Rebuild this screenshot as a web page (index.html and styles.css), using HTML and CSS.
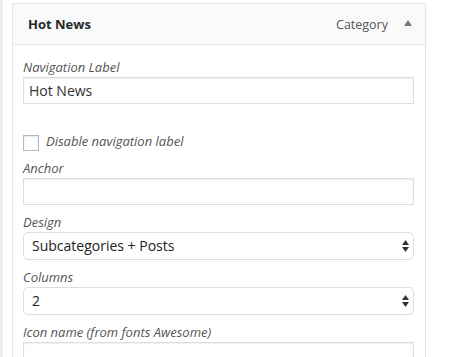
FILE: index.html
```html
<!DOCTYPE html>
<html lang="en">
<head>
    <meta charset="UTF-8">
    <meta name="viewport" content="width=device-width, initial-scale=1.0">
    <title>Menu item settings</title>
    <link rel="stylesheet" href="styles.css">
</head>
<body>
    <div class="page">
        <div class="menu-item">
            <!-- Header -->
            <div class="item-bar">
                <span class="item-title">Hot News</span>
                <span class="item-controls">
                    <span class="item-type">Category</span>
                    <svg class="item-toggle" width="8" height="6" viewBox="0 0 8 6">
                        <path d="M4 0 L8 6 L0 6 Z" fill="#777"/>
                    </svg>
                </span>
            </div>

            <!-- Settings -->
            <div class="item-settings">
                <div class="field">
                    <label for="navLabel">Navigation Label</label>
                    <input type="text" id="navLabel" value="Hot News">
                </div>

                <div class="field-check">
                    <span class="checkbox"></span>
                    <span class="check-label">Disable navigation label</span>
                </div>

                <div class="field">
                    <label for="anchor">Anchor</label>
                    <input type="text" id="anchor">
                </div>

                <div class="field">
                    <label for="design">Design</label>
                    <div class="select-wrap">
                        <div class="select" id="design">Subcategories + Posts</div>
                        <svg class="select-arrows" width="7" height="12" viewBox="0 0 7 12">
                            <path d="M3.5 0 L7 5 L0 5 Z M3.5 12 L7 7 L0 7 Z" fill="#333"/>
                        </svg>
                    </div>
                </div>

                <div class="field">
                    <label for="columns">Columns</label>
                    <div class="select-wrap">
                        <div class="select" id="columns">2</div>
                        <svg class="select-arrows" width="7" height="12" viewBox="0 0 7 12">
                            <path d="M3.5 0 L7 5 L0 5 Z M3.5 12 L7 7 L0 7 Z" fill="#333"/>
                        </svg>
                    </div>
                </div>

                <div class="field">
                    <label for="icon">Icon name (from fonts Awesome)</label>
                    <input type="text" id="icon">
                </div>
            </div>
        </div>
    </div>
</body>
</html>
```

FILE: styles.css
```css
body {
    font-family: "Open Sans", "Liberation Sans", sans-serif;
    margin: 0;
    padding: 0;
    background-color: #fff;
    color: #333;
    overflow: hidden;
    height: 357px;
}

.page {
    border-left: 3px solid #eee;
    padding: 3px 0 0 9px;
    height: 357px;
    box-sizing: border-box;
    overflow: hidden;
}

.menu-item {
    width: 414px;
    box-sizing: border-box;
    border: 1px solid #e5e5e5;
    border-bottom: none;
}

.item-bar {
    height: 40px;
    background-color: #fafafa;
    border-bottom: 1px solid #e5e5e5;
    display: flex;
    align-items: center;
    justify-content: space-between;
    padding: 0 13px 0 15px;
}

.item-title {
    font-size: 13px;
    font-weight: bold;
    color: #23282d;
}

.item-controls {
    display: flex;
    align-items: center;
    gap: 16px;
}

.item-type {
    font-size: 12.5px;
    color: #555;
}

.item-toggle {
    margin-top: -2px;
}

.item-settings {
    padding: 12px 11px 0 10px;
}

.field {
    margin-bottom: 7px;
}

.field label {
    display: block;
    font-size: 13px;
    font-style: italic;
    line-height: 20px;
    color: #555;
}

.field input {
    display: block;
    width: 100%;
    height: 27px;
    box-sizing: border-box;
    margin: 0;
    padding: 0 5px;
    border: 1px solid #ddd;
    border-radius: 0;
    box-shadow: inset 0 1px 2px rgba(0, 0, 0, 0.07);
    font-family: inherit;
    font-size: 14px;
    color: #333;
    background-color: #fff;
}

.field-check {
    display: flex;
    align-items: center;
    height: 20px;
    margin: 27px 0 7px;
}

.checkbox {
    width: 16px;
    height: 16px;
    box-sizing: border-box;
    border: 1px solid #b4b9be;
    box-shadow: inset 0 1px 2px rgba(0, 0, 0, 0.1);
    margin-right: 7px;
    margin-top: 3px;
}

.check-label {
    font-size: 13px;
    font-style: italic;
    color: #555;
}

.select-wrap {
    position: relative;
}

.select {
    height: 28px;
    box-sizing: border-box;
    border: 1px solid #ddd;
    border-radius: 5px;
    padding: 0 8px;
    font-size: 14px;
    line-height: 25px;
    color: #222;
    background-color: #fff;
}

.select-arrows {
    position: absolute;
    right: 5px;
    top: 8px;
}
```
